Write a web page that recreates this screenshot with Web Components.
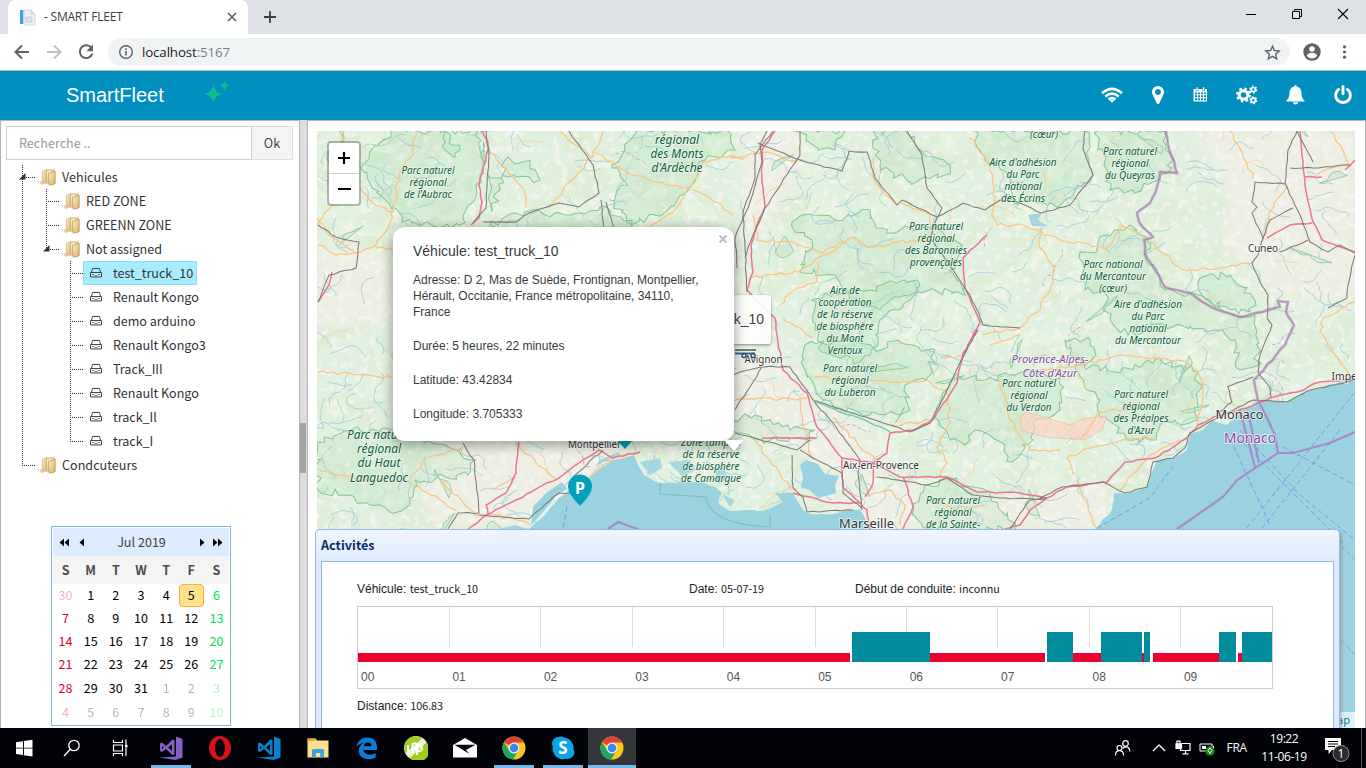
<!DOCTYPE html>
<html lang="fr">
<head>
<meta charset="utf-8">
<title>- SMART FLEET</title>
<style>
html,body{margin:0;height:100%;overflow:hidden}
body{font-family:"Liberation Sans",sans-serif;background:#fff}
</style>
</head>
<body>
<fleet-desktop></fleet-desktop>
<script>
const make = (name, html, after) => customElements.define(name, class extends HTMLElement {
  connectedCallback() {
    if (this.shadowRoot) return;
    const root = this.attachShadow({mode: 'open'});
    root.innerHTML = typeof html === 'function' ? html(this) : html;
    if (after) after(root, this);
  }
});

/* ---------- browser frame ---------- */
make('browser-tabs', `
<style>
:host{display:flex;height:34px;background:#dee1e6;align-items:stretch;font:12px "Open Sans",sans-serif;color:#3c4043}
.tab{width:240px;margin-left:8px;background:#fff;border-radius:8px 8px 0 0;display:flex;align-items:center;box-sizing:border-box;padding:0 10px 0 11px}
.tab span{flex:1;margin:-2px 0 0 8px;letter-spacing:-.22px;white-space:pre}
.plus{margin:9px 0 0 14px;width:16px;height:16px}
.sp{flex:1}
.w{width:46px;display:flex;justify-content:center;align-items:center;height:28px}
svg{display:block}
</style>
<div class="tab"><svg width="17" height="17" viewBox="0 0 17 17"><rect x="1" y="1" width="3.4" height="14" fill="#3ba4d8"/><path d="M5 1h7l4 4v11H5z" fill="#eef2f6" stroke="#c8d0d9" stroke-width=".8"/><path d="M12 1v4h4M7 8h6v5H7z" fill="#dbe2ea" stroke="#bcc6d0" stroke-width=".7"/></svg>
<span>- SMART FLEET</span>
<svg width="12" height="12" viewBox="0 0 12 12"><path d="M2 2l8 8M10 2l-8 8" stroke="#5f6368" stroke-width="1.7"/></svg></div>
<svg class="plus" viewBox="0 0 16 16"><path d="M8 2v12M2 8h12" stroke="#3c4043" stroke-width="1.8"/></svg>
<div class="sp"></div>
<div class="w"><svg width="12" height="12"><path d="M1 6.5h10" stroke="#000"/></svg></div>
<div class="w"><svg width="12" height="12"><path d="M1.5 3.5h7v7h-7zM3.5 3.500v-2h7v7h-2" fill="none" stroke="#000"/></svg></div>
<div class="w"><svg width="12" height="12"><path d="M1 1l10 10M11 1L1 11" stroke="#000" stroke-width="1.1"/></svg></div>
`);

make('browser-toolbar', `
<style>
:host{display:flex;height:36px;background:#fff;border-bottom:1px solid #b9b5b8;align-items:center;font:14px "Open Sans",sans-serif;color:#202124}
svg{display:block;flex:none}
.nav{display:flex;flex:none;gap:14px;padding-left:13px;width:108px;box-sizing:border-box}
.bar{flex:none;width:1182px;height:28px;border-radius:14px;background:#f0f3f4;display:flex;align-items:center;box-sizing:border-box;padding:0 9px 0 9px}
.bar span{flex:1;margin-left:8px;font-size:13.3px;letter-spacing:-.12px}
i{font-style:normal;color:#7c8085}
.end{display:flex;gap:14px;margin-left:12px;align-items:center}
</style>
<div class="nav">
<svg width="18" height="18" viewBox="0 0 18 18"><path d="M16 9H3M9 2.500L2.500 9 9 15.500" fill="none" stroke="#5f6368" stroke-width="2"/></svg>
<svg width="18" height="18" viewBox="0 0 18 18"><path d="M2 9h13M9 2.500L15.500 9 9 15.500" fill="none" stroke="#bdbfc1" stroke-width="2"/></svg>
<svg width="18" height="18" viewBox="0 0 18 18"><path d="M14.600 5.200A6.400 6.400 0 1 0 15.300 10.600" fill="none" stroke="#5f6368" stroke-width="2"/><path d="M16 1.500v6.800H9.300z" fill="#5f6368"/></svg>
</div>
<div class="bar">
<svg style="margin-left:1px" width="16" height="16" viewBox="0 0 16 16"><circle cx="8" cy="8" r="6.300" fill="none" stroke="#5f6368" stroke-width="1.400"/><path d="M8 7v4.500M8 4.300v1.600" stroke="#5f6368" stroke-width="1.600"/></svg>
<span>localhost<i>:5167</i></span>
<svg width="17" height="17" viewBox="0 0 24 24"><path d="M12 3l2.700 6.200 6.800.6-5.100 4.500 1.500 6.600L12 17.400l-5.900 3.500 1.500-6.600-5.100-4.500 6.800-.6z" fill="none" stroke="#5f6368" stroke-width="1.900"/></svg>
</div>
<div class="end">
<svg width="20" height="20" viewBox="0 0 20 20"><circle cx="10" cy="10" r="8.700" fill="#5f6368"/><circle cx="10" cy="7" r="2.800" fill="#fff"/><path d="M4.800 13.800c.8-4 9.600-4 10.400 0-2.400 3.600-8 3.600-10.400 0z" fill="#fff"/></svg>
<svg width="16" height="16" viewBox="0 0 16 16" fill="#5f6368"><circle cx="8.500" cy="2.800" r="1.600"/><circle cx="8.500" cy="8" r="1.600"/><circle cx="8.500" cy="13.200" r="1.600"/></svg>
</div>
`);

/* ---------- application header ---------- */
make('app-header', `
<style>
:host{display:flex;height:49px;background:#008fbf;align-items:center;color:#fff;font:20px "Liberation Sans",sans-serif;box-sizing:border-box;padding-bottom:2px}
b{font-weight:400;margin-left:66px;width:138px;line-height:24px}
.icons{margin-left:auto;display:flex;align-items:center;padding-right:14px}
svg{display:block;fill:#fff}
</style>
<b>SmartFleet</b>
<svg width="26" height="24" viewBox="0 0 26 24" style="fill:#0dbd92;margin-top:-6px"><path d="M9.500 5q1.200 7.500 9 9-7.800 1.500-9 9-1.200-7.500-9-9 7.800-1.500 9-9zM20.500 0q.8 4.600 5 5.500-4.200.9-5 5.500-.8-4.600-5-5.500 4.200-.9 5-5.500z"/></svg>
<div class="icons">
<svg style="margin-right:29px" width="22" height="16" viewBox="0 0 22 16"><g fill="none" stroke="#fff" stroke-width="2.600"><path d="M1 6.200Q11-2.600 21 6.200"/><path d="M4.300 9.400q6.700-5.400 13.400 0"/><path d="M7.500 12.400q3.500-2.600 7 0"/></g><path d="M11 15.800l-2.200-2.200q2.200-1.700 4.400 0z"/></svg>
<svg style="margin-right:29px" width="12" height="18" viewBox="0 -1408 1024 1536"><path transform="scale(1,-1)" d="M768 896q0 106 -75 181t-181 75t-181 -75t-75 -181t75 -181t181 -75t181 75t75 181zM1024 896q0 -109 -33 -179l-364 -774q-16 -33 -47.500 -52t-67.500 -19t-67.500 19t-46.500 52l-365 774q-33 70 -33 179q0 212 150 362t362 150t362 -150t150 -362z"/></svg>
<svg style="margin-right:28px" width="15" height="15" viewBox="0 0 15 15"><path fill-rule="evenodd" d="M.5 2h13.500v12.500H.500zM2 5.500h2.200v1.700H2zM5 5.500h2v1.700H5zM8 5.500h2v1.700H8zM11 5.500h2v1.700h-2zM2 8.200h2.200v2H2zM5 8.200h2v2H5zM8 8.200h2v2H8zM11 8.200h2v2h-2zM2 11.200h2.200v2H2zM5 11.200h2v2H5zM8 11.200h2v2H8zM11 11.200h2v2h-2z"/><path d="M3.200 0h1.800v4H3.200zM9.700 0h1.800v4H9.700z" stroke="#008fbf" stroke-width=".5"/></svg>
<svg style="margin-right:28px" width="22" height="20" viewBox="0 0 22 20"><g fill="none" stroke="#fff"><circle cx="7.500" cy="10" r="4.300" stroke-width="3"/><circle cx="7.500" cy="10" r="6.400" stroke-width="2.200" stroke-dasharray="2.510 2.516"/><circle cx="17.300" cy="4.600" r="2.100" stroke-width="1.700"/><circle cx="17.300" cy="4.600" r="3.400" stroke-width="1.300" stroke-dasharray="1.700 1.860"/><circle cx="17.300" cy="15.300" r="2.100" stroke-width="1.700"/><circle cx="17.300" cy="15.300" r="3.400" stroke-width="1.300" stroke-dasharray="1.700 1.860"/></g></svg>
<svg style="margin-right:29px" width="19" height="20" viewBox="0 0 18 20"><path d="M9 0q1.200 0 1.200 1.500Q15 2.700 15 8c0 4.500 1.500 6 3 7.500v.9H0v-.9C1.500 14 3 12.500 3 8q0-5.300 4.800-6.500Q7.800 0 9 0zM6.400 17.200h5.200Q11.300 19.600 9 19.600t-2.600-2.400z"/></svg>
<svg width="18" height="19" viewBox="0 -1536 1536 1664"><path transform="scale(1,-1)" d="M1536 640q0 -156 -61 -298t-164 -245t-245 -164t-298 -61t-298 61t-245 164t-164 245t-61 298q0 182 80.500 343t226.500 270q43 32 95.500 25t83.500 -50q32 -42 24.500 -94.500t-49.500 -84.500q-98 -74 -151.500 -181t-53.500 -228q0 -104 40.500 -198.500t109.500 -163.500t163.500 -109.500t198.500 -40.500t198.500 40.500t163.500 109.500t109.500 163.500t40.500 198.500q0 121 -53.500 228t-151.500 181q-42 32 -49.500 84.500t24.500 94.500q31 43 84 50t95 -25q146 -109 226.500 -270t80.500 -343zM896 1408v-640q0 -52 -38 -90t-90 -38t-90 38t-38 90v640q0 52 38 90t90 38t90 -38t38 -90z"/></svg>
</div>
`);

/* ---------- side panel ---------- */
make('search-box', `
<style>
:host{display:flex;height:34px;box-sizing:border-box;font:12.600px "Noto Sans CJK JP","Source Sans Pro",sans-serif;width:287px}
.f{flex:1;border:1px solid #ccd0d9;padding-left:12px;display:flex;align-items:center;color:#999}
.b{width:40px;border:1px solid #ddd;border-left:0;background:#f4f4f4;display:flex;align-items:center;justify-content:center;color:#444;border-radius:0 2px 2px 0}
.f,.b{padding-bottom:1px}
</style><div class="f">Recherche ..</div><div class="b">Ok</div>`);

const ICONS = {
  folder: `<svg width="16" height="17" viewBox="0 0 16 17"><defs><linearGradient id="g" x1="0" y1="0" x2="1" y2="1"><stop offset="0" stop-color="#fff3d2"/><stop offset="1" stop-color="#d8ad62"/></linearGradient></defs><path d="M2.500 2l5-1.500v13l-6 2-1.300-2L2.200 11z" fill="url(#g)" stroke="#d6bd8f" stroke-width=".7"/><path d="M6.500 1L14 .8l1 1.200v12.500l-4 1.200-4.500-2z" fill="url(#g)" stroke="#c4a063" stroke-width=".7"/><path d="M8.500 4.500l6.500-2v12.300l-6 1.500z" fill="url(#g)" stroke="#b48a48" stroke-width=".6"/></svg>`,
  car: `<svg width="12" height="10" viewBox="0 0 12 10" fill="none" stroke="#444"><path d="M1.500 4.500l1-4h7l1 4M.5 4.500h11v4.500H.5z"/><path d="M2 6.500h2M8 6.500h2M4.500 7.500h3" stroke-opacity=".65"/></svg>`
};
make('tree-node', el => `
<style>
:host{display:grid;grid-template-columns:24px 1fr;grid-template-rows:24px auto;color:#333;font:12.600px/24px "Noto Sans CJK JP","Source Sans Pro",sans-serif}
.line{grid-column:1;grid-row:1/3;width:1px;background:repeating-linear-gradient(#333 0 1px,transparent 1px 2px)}
:host([last]) .line{height:13px}
.row{grid-column:1/3;grid-row:1;display:flex;align-items:center;position:relative;white-space:pre}
.dots{width:13px;height:1px;margin-top:1px;background:repeating-linear-gradient(90deg,#333 0 1px,transparent 1px 2px)}
.lab{display:flex;align-items:center;height:24px;box-sizing:border-box}
.lab svg{display:block}
.folder{padding-left:6px;gap:5px}
.folder svg{margin-left:-1px;margin-right:1px}
.car{padding:0 3px 0 6px;gap:11px;border:1px solid transparent;letter-spacing:-.04px}
.car svg{margin-top:-1px}
:host([selected]) .lab{background:#a8edff;border-color:#94dcf3;border-radius:1px}
.kids{grid-column:2;grid-row:2}
.arrow{position:absolute;left:-3px;top:8px}
</style>
<div class="line"></div>
<div class="row"><div class="dots"></div>${el.hasAttribute('open') ? '<svg class="arrow" width="7" height="7"><path d="M6.500 0v6.500H0z" fill="#333"/></svg>' : ''}<div class="lab ${el.getAttribute('icon')}">${ICONS[el.getAttribute('icon')]}<span>${el.getAttribute('label')}</span></div></div>
<div class="kids"><slot></slot></div>`);

make('month-calendar', `
<style>
:host{display:block;width:180px;height:200px;box-sizing:border-box;border:1px solid #7fb2e5;padding:1px;font:12.600px "Noto Sans CJK JP","Source Sans Pro",sans-serif;color:#000;background:#fff}
.h{height:28px;background:#ddecfe;display:flex;align-items:center;color:#404040;padding:0 5px 0 6px}
.h span{flex:1;text-align:center;margin:-2px 2px 0 0}
.g{display:grid;grid-template-columns:repeat(7,1fr);grid-template-rows:28px 23px 23px 23px 23px 24px 24px}
.g div{display:flex;align-items:center;justify-content:center;box-sizing:border-box;padding:0 0 2px 0}
.d{background:#f4f4f4;font-weight:700;color:#4d4d4d}
.sun{color:#d9001b}.sat{color:#00e04c}.out{opacity:.3}
.g .today{background:#ffe28d;border:1px solid #ffab3f;border-radius:4px}
svg{display:block}
</style>
<div class="h"><svg width="28" height="9"><path d="M5 .500v8L.500 4.500zM10 .500v8L5.500 4.500zM25 .500v8l-4.500-4z"/></svg><span>Jul 2019</span><svg width="26" height="9"><path d="M2 .500v8l4.500-4zM15 .500v8l4.500-4zM20 .500v8l4.500-4z"/></svg></div>
<div class="g"></div>`, root => {
  const g = root.querySelector('.g');
  let h = [...'SMTWTFS'].map(d => `<div class="d">${d}</div>`).join('');
  for (let i = 0; i < 42; i++) {
    const n = i === 0 ? 30 : i > 31 ? i - 31 : i, c = [];
    if (i % 7 === 0) c.push('sun');
    if (i % 7 === 6) c.push('sat');
    if (i === 0 || i > 31) c.push('out');
    if (i === 5) c.push('today');
    h += `<div class="${c.join(' ')}">${n}</div>`;
  }
  g.innerHTML = h;
});

make('side-panel', `
<style>
:host{display:flex;flex-direction:column;width:300px;box-sizing:border-box;border:1px solid #b5b5b5;border-bottom:0;background:#fff;padding:5px 0 0 5px}
.tree{padding:5px 0 0 16px;height:361px}
month-calendar{margin-left:45px}
</style>
<search-box></search-box>
<div class="tree">
<tree-node label="Vehicules" icon="folder" open>
 <tree-node label="RED ZONE" icon="folder"></tree-node>
 <tree-node label="GREENN ZONE" icon="folder"></tree-node>
 <tree-node label="Not assigned" icon="folder" open last>
  <tree-node label="test_truck_10" icon="car" selected></tree-node>
  <tree-node label="Renault Kongo" icon="car"></tree-node>
  <tree-node label="demo arduino" icon="car"></tree-node>
  <tree-node label="Renault Kongo3" icon="car"></tree-node>
  <tree-node label="Track_III" icon="car"></tree-node>
  <tree-node label="Renault Kongo" icon="car"></tree-node>
  <tree-node label="track_Il" icon="car"></tree-node>
  <tree-node label="track_I" icon="car" last></tree-node>
 </tree-node>
</tree-node>
<tree-node label="Condcuteurs" icon="folder" last></tree-node>
</div>
<month-calendar></month-calendar>`);

make('split-bar', `
<style>:host{display:flex;align-items:flex-start;width:7px;background:#dcdcdc}
div{width:6px;height:50px;margin-top:303px;background:#a5a5a5}</style><div></div>`);

/* ---------- map ---------- */
let seed = 7;
const rnd = () => (seed = (seed * 16807) % 2147483647) / 2147483647;
const pts = s => s.trim().split(/\s+/).map(p => p.split(',').map(Number));
const rough = (s, amp, step = 6) => {
  const p = pts(s), out = [p[0]];
  for (let i = 1; i < p.length; i++) {
    const [a, b] = p[i - 1], [c, d] = p[i], n = Math.max(1, Math.round(Math.hypot(c - a, d - b) / step));
    for (let k = 1; k <= n; k++) {
      const t = k / n, j = k < n ? amp : 0;
      out.push([a + (c - a) * t + (rnd() - .5) * 2 * j, b + (d - b) * t + (rnd() - .5) * 2 * j]);
    }
  }
  return 'M' + out.map(q => q[0].toFixed(1) + ' ' + q[1].toFixed(1)).join('L');
};
const PLAINS = [
 '1190,131 1355,131 1355,300 1290,300 1262,290 1255,262 1225,255 1230,200 1215,160',
 '700,370 735,345 790,365 810,395 860,430 890,450 870,510 800,450 735,430',
 '440,445 520,442 600,442 640,450 560,492 520,529 440,529 420,500',
 '318,250 350,240 390,265 393,320 318,330','980,500 1100,480 1115,510 1095,529 980,529','820,500 920,480 930,529 867,529',
 '740,131 800,131 800,180 770,220 745,250'];
const PARKS = [
 '391,131 361,168 372,188 395,208 402,222 440,228 460,225 476,195 483,165 478,131',
 '636,131 625,150 612,168 627,185 610,200 632,225 668,210 690,188 705,160 735,150 728,131',
 '795,131 818,150 835,150 845,131','873,131 880,165 910,182 945,175 950,165 925,155 905,131',
 '792,222 812,215 838,221 858,213 870,210 876,228 900,230 925,226 962,245 950,270 965,295 930,290 900,297 880,310 850,300 835,275 800,272 812,240 795,232',
 '812,300 835,292 870,290 905,280 920,285 910,300 880,320 878,345 860,362 822,352 815,330',
 '1097,131 1104,165 1110,190 1135,193 1160,180 1172,168 1165,131','975,131 1085,131 1093,175 1060,205 1015,203 1003,170 985,160',
 '1080,252 1095,253 1105,235 1130,225 1148,240 1146,260 1165,290 1200,295 1238,317 1255,315 1258,365 1240,370 1235,340 1215,330 1180,325 1150,328 1128,335 1110,320 1104,290 1085,290',
 '1075,365 1120,372 1155,360 1198,372 1198,420 1160,425 1150,440 1127,440 1115,425 1098,412 1100,400 1085,388',
 '805,345 850,340 875,350 900,342 935,350 930,375 905,385 910,410 870,415 840,408 818,395 805,370',
 '955,375 985,380 1030,370 1060,378 1060,410 1033,425 1033,440 1012,462 1005,445 975,430 965,445 950,440 935,418',
 '318,442 350,430 393,430 450,448 475,460 468,475 415,480 410,505 390,512 370,505 345,495 318,490',
 '735,420 755,415 790,430 815,430 810,440 755,440 735,432','925,485 950,480 990,492 1015,529 930,529 912,515','490,225 525,212 565,215 600,207 640,228 600,260 520,250',
 '445,131 452,145 460,150 455,157 445,150','540,180 535,170 530,160 505,160 500,190 492,212 488,175','1200,278 1230,275 1255,300 1250,312 1215,307 1200,292',
 '1065,340 1075,338 1090,340 1096,355 1085,365 1070,355'];
const WAY = {
 motor: ['482,131 488,142 488,150 484,165 479,185 482,202 479,218 471,225','775,131 762,150 762,182 765,207 757,225 751,245 753,272 747,290 775,318 778,342 783,370 807,393 817,427 842,458 843,487 867,510 870,529','978,330 963,353 957,383 933,420 913,430 890,433 887,453 873,463 873,483 865,497','987,235 963,258 965,288 980,322 968,345 960,365','842,458 873,463 900,477 947,477 977,492 1020,493 1047,498 1067,487 1107,482 1125,462 1155,458 1173,447 1187,438 1198,425 1220,415 1247,408 1270,398 1297,392 1320,382 1355,379','1047,498 1030,510 1020,525 1005,529','762,438 817,438','640,452 613,458 599,450 579,463 563,475 516,500 486,515 468,529','519,442 516,473 506,493 486,505 488,514','1300,131 1305,185 1313,222 1322,240 1355,252','1267,238 1290,225 1312,223','1305,177 1322,177','903,477 913,507 903,529','793,493 833,503 860,503','318,302 329,285 332,272','1345,170 1355,160'],
 rail: ['773,131 755,155 755,178 743,212 745,248 747,292','767,131 760,145 762,162 750,202 735,238 737,268','800,131 800,155 765,208 753,235 745,258','758,143 800,160 842,171 849,151 867,152 875,178 897,205 902,200 937,217 963,203 985,210 1000,200 1017,202 1042,213 1070,205 1093,175 1083,148 1085,131','907,131 922,155 927,188 942,208 937,218 930,238 950,265 970,295 983,325 1020,328','977,330 963,357 947,390 930,423 910,432 890,425 843,410 813,400 790,367 762,367 750,387 735,410','735,433 797,450 810,440','813,400 833,423 860,460 858,473 862,510','800,450 823,463 842,473 843,493 862,508','792,455 793,487 803,497 807,512 853,510','486,131 489,155 486,208 473,223','483,222 516,222 529,213 559,203 579,207 599,193 593,165 569,131','601,200 604,228','606,202 614,228','318,225 336,237 359,242 356,268 329,275 318,302','463,443 474,460 479,513 458,513 448,529','479,515 529,519 559,493 569,493 573,477 603,450','1297,131 1288,150 1285,183 1300,215 1310,242 1328,252 1340,245 1355,253','1285,184 1255,182 1252,202 1257,207 1252,213 1263,238 1258,255 1252,263 1260,282 1268,295 1267,318 1272,325 1260,355 1258,372 1270,388 1271,397','1263,238 1270,220 1293,208','1290,168 1313,168 1350,165','1297,131 1313,162','1280,252 1308,240','1355,255 1348,285 1347,298 1328,308','1040,498 1062,487 1103,482 1125,493 1147,487 1153,462 1173,458 1185,448 1190,433 1223,415 1253,400 1287,402 1307,391 1355,380','1227,387 1253,377','1228,387 1232,402 1220,412','877,477 887,478 927,485 947,478 973,495 1005,498 1045,500','762,367 740,372 728,378','1010,529 1030,500 1047,498'],
 road: ['416,131 413,155 399,175 394,208 388,228 376,245 356,253 329,235 317,218','361,188 376,205 394,212','318,245 336,255 356,253','376,248 393,248','488,148 523,188 526,208','549,208 569,182 593,157 603,131','594,152 633,175 666,185 691,187 676,208 649,228','691,187 703,162 726,157 745,158','693,190 716,202 733,215','730,158 767,152 797,162','753,215 757,240 793,242 823,253 853,237 873,248 897,242 930,240','750,278 780,273 798,272 847,242','780,305 797,288 817,282 818,262','783,318 813,338','970,138 983,155 993,175 995,198 992,215 997,225 1023,225 1060,240 1107,248 1122,225 1150,242 1183,270 1227,267 1253,262','873,158 875,182 897,205','900,202 930,215 932,235','1040,228 1040,248 1053,265 1053,282 1037,312 1020,328 983,335','1230,131 1243,155 1253,178','1287,185 1270,212 1264,236','1317,175 1330,168 1350,165 1340,145 1330,131','1355,302 1323,318 1320,332 1333,352 1350,375','1040,370 1080,365 1120,355 1187,362 1198,372 1203,392 1197,425','1073,475 1067,458 1090,448 1123,440 1153,438','1077,480 1083,498 1097,528','318,372 363,375 393,378','316,468 336,475 370,480','406,480 430,495 456,510','410,478 429,457 463,447','516,443 536,463 556,480','493,490 516,478','815,377 867,380 900,383 927,380 947,393','735,400 807,398','892,425 930,420','947,393 950,423 937,447 947,463 940,477','833,417 860,447 883,463','800,397 803,427 813,460','755,440 783,480 800,495','940,357 963,357','560,131 575,145 593,157','317,225 335,200 330,180 345,160 340,131','590,477 613,458 634,453','440,480 475,515 500,515 530,525','1000,380 1010,420 1030,450 1060,450','990,345 1020,335','1080,440 1100,412 1140,408','870,495 890,490 905,505 900,525','930,500 960,510 985,505','1180,440 1150,455 1120,490']};
const SEA = '529,529 545,515 558,499 566,493 590,477 603,467 613,460 634,455 639,467 644,475 659,483 700,482 715,487 722,493 718,503 730,511 748,510 763,511 783,502 775,493 793,493 803,510 810,514 833,514 850,510 860,510 866,520 868,532 868,729 529,729';
const SEA_E = '1095,529 1112,510 1114,493 1127,494 1147,487 1152,472 1157,460 1173,458 1187,450 1190,434 1203,430 1212,421 1227,425 1243,410 1260,400 1287,402 1307,391 1340,382 1356,380 1356,729 1090,729';
const LABELS = [
 ['p',428,170,['Parc naturel',53],['régional',37],["de l'Aubrac",48]],
 ['q',677,140,['régional',44],['des Monts',53],["d'Ardèche",51]],
 ['p',1023,162,["Aire d'adhésion",67],['du Parc',33],['national',37],['des Écrins',44]],
 ['p',1044,134,['(cœur)',28]],
 ['p',1130,151,['Parc naturel',54],['régional',37],['du Queyras',50]],
 ['p',936,226,['Parc naturel',54],['régional',37],['des Baronnies',62],['provençales',52]],
 ['p',845,290,['Aire de',30],['coopération',53],['de la réserve',56],['de biosphère',57],['du Mont',37],['Ventoux',35]],
 ['p',1113,264,['Parc national',59],['du Mercantour',66],['(cœur)',28]],
 ['p',1148,304,["Aire d'adhésion",68],['du Parc',33],['national',37],['du Mercantour',66]],
 ['p',850,368,['Parc naturel',54],['régional',37],['du Luberon',51]],
 ['p',1029,383,['Parc naturel',54],['régional',37],['du Verdon',45]],
 ['p',1141,394,['Parc naturel',54],['régional',37],['des Préalpes',55],["d'Azur",27]],
 ['p',953,500,['Parc naturel',54],['régional',37],['de la Sainte-',54]],
 ['p',711,442,['Zone tampon',60],['de la réserve',57],['de biosphère',57],['de Camargue',60]],
 ['q',379,435,['Parc naturel',64],['régional',44],['du Haut',43],['Languedoc',58]],
 ['r',1050,359,['Provence-Alpes-',77],["Côte d'Azur",55]]];
const LH = {p: 12, q: 14.4, r: 14.4};
make('fleet-map', `
<style>
:host{display:block;position:relative;height:597px;overflow:hidden;background:#dcecd3}
svg.m{display:block;width:1038px;height:597px}
.p,.q,.r{font-family:"Noto Sans",sans-serif;font-style:italic;text-anchor:middle;paint-order:stroke;stroke:#fff;stroke-opacity:.6;stroke-width:1.600px;stroke-linejoin:round;fill:#075c37}
.p{font-size:10px}.q{font-size:12px}.r{font-size:11px;fill:#8a4f9c}
.c{font-family:"Noto Sans",sans-serif;paint-order:stroke;stroke:#fff;stroke-opacity:.65;stroke-width:2px;fill:#333}
.zoom{position:absolute;left:10px;top:10px;border:2px solid rgba(0,0,0,.25);border-radius:4px;width:30px;background:#fff;background-clip:padding-box}
.zoom svg{display:block;width:30px;height:30px}
.zoom svg+svg{border-top:1px solid #ccc;height:30px}
.tip{position:absolute;right:584px;top:164px;width:60px;height:49px;box-sizing:border-box;padding-right:7px;background:rgba(255,255,255,.87);color:#444;font:14px/49px "Liberation Sans",sans-serif;text-align:right;box-shadow:0 1px 3px rgba(0,0,0,.4);border-radius:3px}
.attr{position:absolute;right:0;bottom:0;height:16px;padding:0 5px;background:rgba(255,255,255,.7);color:#0078a8;font:11px/15px "Noto Sans CJK JP",sans-serif}
slot{display:block}
::slotted(map-popup){position:absolute;left:76px;top:96px}
</style>
<svg class="m" viewBox="317 131 1038 597"></svg>
<div class="zoom"><svg viewBox="0 0 30 30"><path d="M15 9v12M9 15h12" stroke="#000" stroke-width="2.200"/></svg><svg viewBox="0 0 30 30"><path d="M9 15h13" stroke="#000" stroke-width="2"/></svg></div>
<div class="tip">k_10</div>
<div class="attr">ap</div>
<slot></slot>`, root => {
  const P = (d, a) => `<path d="${d}" ${a}/>`;
  let streams = '', minor = '', admin = '', patches = '';
  for (let i = 0; i < 460; i++) {
    let x = 317 + rnd() * 1038, y = 131 + rnd() * 400, a = rnd() * 6.3, d = `M${x.toFixed(1)} ${y.toFixed(1)}`;
    for (let k = 0, n = 5 + rnd() * 9; k < n; k++) {
      a += (rnd() - .5) * 1.5; x += Math.cos(a) * 3.6; y += Math.sin(a) * 3;
      d += `L${x.toFixed(1)} ${y.toFixed(1)}`;
    }
    if (i % 16 === 1) minor += d; else if (i % 26 === 2) admin += d; else if (i % 14 === 3) patches += d + 'Z'; else streams += d;
  }
  const land = `<defs>
<filter id="n" x="0" y="0" width="100%" height="100%"><feTurbulence type="fractalNoise" baseFrequency=".022 .03" numOctaves="6" seed="11"/><feColorMatrix values="0 0 0 0 .75  0 0 0 0 .88  0 0 0 0 .75  8 0 0 0 -3.400"/></filter>
<filter id="n2" x="0" y="0" width="100%" height="100%"><feTurbulence type="fractalNoise" baseFrequency=".13" numOctaves="4" seed="4"/><feColorMatrix values="0 0 0 0 .95  0 0 0 0 .92  0 0 0 0 .9  0 8 0 0 -4.500"/></filter>
<filter id="n3" x="0" y="0" width="100%" height="100%"><feTurbulence type="fractalNoise" baseFrequency=".03 .04" numOctaves="5" seed="23"/><feColorMatrix values="0 0 0 0 .83  0 0 0 0 .95  0 0 0 0 .76  0 0 9 0 -4.700"/></filter>
<filter id="b" x="-20%" y="-20%" width="140%" height="140%"><feGaussianBlur stdDeviation="7"/></filter>
<pattern id="h" width="5" height="5" patternUnits="userSpaceOnUse" patternTransform="rotate(45)"><path d="M0 0v5" stroke="#f0a090" stroke-width="1"/></pattern></defs>
<rect x="317" y="131" width="1038" height="597" fill="#ddedd6"/>
<rect x="317" y="131" width="1038" height="400" filter="url(#n3)" opacity=".6"/>
<rect x="317" y="131" width="1038" height="400" filter="url(#n)" opacity=".8"/>`;
  let s = land + PLAINS.map(p => `<polygon points="${p}" fill="#f3efe7" opacity=".75" filter="url(#b)"/>`).join('');
  s += `<rect x="317" y="131" width="1038" height="400" filter="url(#n2)" opacity=".7"/>`;
  s += PARKS.map(p => P(rough(p + ' ' + p.split(' ')[0], 3.8, 5) + 'Z', 'fill="#a2dcaa" fill-opacity=".2" stroke="#86c898" stroke-width="1.050"')).join('');
  s += P(patches, 'fill="#b4dfb8" fill-opacity=".3" stroke="#8ccb9c" stroke-width=".9"');
  s += P(streams, 'fill="none" stroke="#9bccd6" stroke-width=".8"') + P(minor, 'fill="none" stroke="#f9d09c" stroke-width=".9"') + P(admin, 'fill="none" stroke="#c9a0cb" stroke-width=".9" stroke-dasharray="4 2"');
  s += P('M1020 418L1026 412 1045 417 1070 425 1082 419 1106 416 1103 429 1085 440 1045 437 1022 431Z', 'fill="#fbd5c8" fill-opacity=".7" stroke="#eeb3a2" stroke-opacity=".6"') + P('M1020 418L1045 417 1070 425 1106 416 1103 429 1085 440 1045 437 1022 431Z', 'fill="url(#h)" opacity=".3"');
  s += P(rough(SEA, .6) + 'Z', 'fill="#9ad2e0"') + P(rough(SEA_E, .7) + 'Z', 'fill="#9ad2e0"');
  s += P('M533 507L546 493 562 482 567 489 556 496 545 510 531 525ZM800 465L806 460 818 464 825 474 839 476 835 485 836 493 818 498 808 489 801 488 803 477Z', 'fill="#9ad2e0"');
  s += P('M640 462L660 458 662 468 650 475ZM668 462L690 460 696 470 682 476ZM715 470L722 463 728 478 718 484ZM595 466L612 458 620 455 618 452 600 460ZM722 495L735 500 730 507ZM500 529L515 525 528 529ZM1028 215L1042 213 1038 220 1048 226 1032 226Z', 'fill="#9ad2e0" opacity=".85"');
  s += P('M660 483V494L706 497Q708 524 770 527V515', 'fill="none" stroke="#73c3ad" stroke-width="1.100"');
  s += WAY.road.map(p => P(rough(p, 1.7, 5), 'fill="none" stroke="#fac586" stroke-width="1.300"')).join('');
  s += WAY.motor.map(p => P(rough(p, .7), 'fill="none" stroke="#ec7590" stroke-width="1.500"')).join('');
  s += WAY.rail.map(p => P(rough(p, .6), 'fill="none" stroke="#807b75" stroke-width="1.050"')).join('');
  s += P(rough('813,400 840,412 865,420 890,432', .6), 'fill="none" stroke="#77c6ad" stroke-width="1.400"');
  const bd = rough('1165,131 1168,145 1177,173 1160,172 1157,187 1150,203 1137,213 1139,222 1153,237 1144,240 1145,253 1165,287 1190,293 1213,308 1240,317 1280,307 1278,301 1288,302 1286,312 1294,325 1285,345 1267,365 1254,380 1258,400', .8);
  s += P(bd, 'fill="none" stroke="#bd7fc4" stroke-opacity=".6" stroke-width="2.800"') + P(bd, 'fill="none" stroke="#777" stroke-opacity=".4" stroke-width="1.200"');
  s += P('M1258 400L1267 418 1275 435 1278 453M1240 410L1255 467M1248 412L1259 463M1177 529L1223 497 1237 480 1278 453 1293 453 1330 443 1355 432M608 529L618 522 638 529', 'fill="none" stroke="#a98bc8" stroke-width="2.200"');
  s += P('M1227 432L1270 525M1232 432L1345 545M1247 528L1355 392M1283 447L1355 485M1097 528L1150 498 1173 466M1262 528L1340 430M1240 430L1300 495 1355 540M567 507L563 529M1341 546L1355 560M1341 640L1355 655', 'fill="none" stroke="#6f96e6" stroke-width=".9" stroke-dasharray="5 3"');
  for (const [c, x, y, ...ls] of LABELS) ls.forEach(([t, w], i) => s += `<text class="${c}" x="${x}" y="${y + 3.5 + i * LH[c]}" textLength="${w}" lengthAdjust="spacingAndGlyphs">${t}</text>`);
  for (const [t, x, y, w, f, col] of [['Cuneo',1248,251.500,30,10.500],['Montpellier',568,448,53,10.500],['Avignon',744.500,363,38,10.500],['Aix-en-Provence',843,468.500,76,10.500],['Marseille',839,528,55,13],['Monaco',1215.500,418.500,48,13],['Monaco',1224,443,52,14,'#8d4f9e'],['Imperia',1331.500,379.500,38,10.500]])
    s += `<text class="c" x="${x}" y="${y}" textLength="${w}" lengthAdjust="spacingAndGlyphs" font-size="${f}" ${col ? `style="fill:${col}"` : ''}>${t}</text>`;
  s += `<g fill="none" stroke="#3a4a58" stroke-width="1.400"><path d="M735 350h21"/><path d="M735 353.500h20" stroke="#2a6ea3" stroke-width="2"/><circle cx="744" cy="355.500" r="2"/><circle cx="753" cy="355.500" r="2"/></g>`;
  const pin = (x, y) => `<path transform="translate(${x} ${y})" d="M0 0Q-12-12-12-19.500A12 12 0 0 1 12-19.500Q12-12 0 0z" fill="#00a0bd"/>`;
  s += pin(625, 449) + pin(580, 506) + `<text x="580" y="493.500" font-family="Noto Sans,sans-serif" font-weight="700" font-size="16" fill="#fff" text-anchor="middle">P</text>`;
  root.querySelector('.m').innerHTML = s;
});

make('map-popup', `
<style>
:host{display:block;width:341px;height:214px;box-sizing:border-box;background:#fff;border-radius:12px;padding:14px 20px;box-shadow:0 3px 14px rgba(0,0,0,.4);color:#3a3a3a;font:12px/16px "Liberation Sans",sans-serif}
h4{margin:0 0 11px;font-weight:400;font-size:14px;line-height:20px}
p{margin:0 0 18px;white-space:nowrap}
.x{position:absolute;right:6px;top:7px}
.tail{position:absolute;left:331px;top:213px;z-index:1;overflow:visible;filter:drop-shadow(0 2px 3px rgba(0,0,0,.3))}
</style>
<svg class="x" width="10" height="10"><path d="M1.500 1.500l7 7M8.500 1.500l-7 7" stroke="#c3c3c3" stroke-width="2.400"/></svg>
<h4>Véhicule: test_truck_10</h4>
<p>Adresse: D 2, Mas de Suède, Frontignan, Montpellier,<br>Hérault, Occitanie, France métropolitaine, 34110,<br>France</p>
<p>Durée: 5 heures, 22 minutes</p><p>Latitude: 43.42834</p><p>Longitude: 3.705333</p>
<svg class="tail" width="20" height="12"><path d="M0 0h20L10 11z" fill="#fff"/></svg>`);

/* ---------- activity window ---------- */
make('activity-chart', `
<style>
:host{display:block;width:916px;height:83px;box-sizing:border-box;border:1px solid #ccc}
svg{display:block}
.l{display:flex;font:12px/31px "Liberation Sans",sans-serif;height:26px;color:#555}
.l span{width:91.450px;flex:none;box-sizing:border-box;padding-left:3px}
</style>
<svg width="914" height="55" viewBox="358 607 914 55" shape-rendering="crispEdges"></svg><div class="l"></div>`, root => {
  let s = '', l = '';
  for (let i = 0; i < 10; i++) {
    if (i) s += `<rect x="${Math.round(357.300 + i * 91.450)}" y="607" width="1" height="40" fill="#ddd"/>`;
    l += `<span>0${i}</span>`;
  }
  for (const [a, b] of [[358,850],[930,1045],[1073,1101],[1142,1144],[1153,1219],[1238,1242]]) s += `<rect x="${a}" y="653" width="${b - a}" height="9" fill="#ef0030"/>`;
  for (const [a, b] of [[852,930],[1047,1073],[1101,1142],[1144,1150],[1219,1236],[1242,1272]]) s += `<rect x="${a}" y="632" width="${b - a}" height="30" fill="#008c9a"/>`;
  root.querySelector('svg').innerHTML = s;
  root.querySelector('.l').innerHTML = l;
});

make('activity-window', `
<style>
:host{display:flex;flex-direction:column;width:1025px;height:199px;box-sizing:border-box;border:1px solid #95b8e7;border-bottom:0;border-radius:5px 5px 0 0;background:linear-gradient(#eff5ff,#dfebfd 32px);padding:0 5px;box-shadow:2px 2px 3px rgba(120,120,120,.4)}
header{height:31px;font:700 12.600px/30px "Noto Sans CJK JP",sans-serif;color:#0e2d5f;letter-spacing:.02px}
main{flex:1;background:#fff;border:1px solid #95b8e7;border-bottom:0;padding:17px 0 0 35px;color:#222;font:12px/18px "Liberation Sans",sans-serif;overflow:hidden}
.r{display:grid;grid-template-columns:332px 166px auto;height:27px}
i{font:10.800px/18px "Noto Sans CJK JP",sans-serif;letter-spacing:-.06px}
.d{margin-top:7px}
</style>
<header>Activités</header>
<main><div class="r"><span>Véhicule: <i>test_truck_10</i></span><span>Date: <i>05-07-19</i></span><span>Début de conduite: <i>inconnu</i></span></div>
<activity-chart></activity-chart>
<div class="d">Distance: <i>106.83</i></div></main>`);

make('map-panel', `
<style>
:host{display:block;position:relative;flex:1;box-sizing:border-box;border:1px solid #b5b5b5;border-bottom:0;padding:10px 10px 0 9px;background:#fff;overflow:hidden}
activity-window{position:absolute;left:7px;top:408px}
</style>
<fleet-map><map-popup></map-popup></fleet-map>
<activity-window></activity-window>`);

/* ---------- taskbar ---------- */
const chrome = `<svg viewBox="0 0 24 24"><circle cx="12" cy="12" r="11.500" fill="#fbc916"/><path d="M12 12L2 6.200A11.500 11.500 0 0 1 22 6.500H12z" fill="#db4437"/><path d="M2 6.200A11.500 11.500 0 0 0 11 23.500L16.700 14.500 12 12 7.300 14.500z" fill="#1da462"/><circle cx="12" cy="12" r="5.500" fill="#f1f1f1"/><circle cx="12" cy="12" r="4.300" fill="#4285f4"/></svg>`;
const APPS = [
 ['', `<svg viewBox="0 0 24 24" fill="#fff"><path d="M4 6.200l7-1v6.500H4zM12 5l8.500-1.200v7.900H12zM4 12.600h7v6.500l-7-1zM12 12.600h8.500v7.900L12 19.300z"/></svg>`],
 ['', `<svg viewBox="0 0 24 24" fill="none" stroke="#fff" stroke-width="1.300"><circle cx="14" cy="9.500" r="5.200"/><path d="M10.300 13.200L4 20"/></svg>`],
 ['', `<svg viewBox="0 0 24 24" fill="none" stroke="#fff" stroke-width="1.200"><path d="M5.500 4v2.500h9V4M5.500 9h9v6h-9zM5.500 20v-2.500h9V20M18 3.500V9M18 12v8"/><path d="M17 9h2.500v2.500H17z" fill="#fff" stroke="none"/></svg>`],
 ['run', `<svg viewBox="0 0 24 24"><path fill="#865fc5" fill-rule="evenodd" d="M17 .5L23.500 3v18.500L16.500 24 .5 21.500 17 20.500zM1 7.500l2-1 4 3.500 6.500-6.500 2 .8v14l-2.200.8L7 13l-4 3-2-1zM3 10v3l1.800-1.500zM9 11.500l4 3.200V8.300z"/></svg>`],
 ['', `<svg viewBox="0 0 24 24"><ellipse cx="12" cy="12" rx="11" ry="12" fill="#d9111f"/><ellipse cx="12" cy="12" rx="5" ry="9" fill="#05070d"/></svg>`],
 ['', `<svg viewBox="0 0 24 24"><path fill="#0a7fcc" fill-rule="evenodd" d="M17 .5L23.500 3v18.500L16.500 24 .5 21.500 17 20.500zM1 7.500l2-1 4 3.500 6.500-6.500 2 .8v14l-2.200.8L7 13l-4 3-2-1zM3 10v3l1.800-1.500zM9 11.500l4 3.200V8.300z"/></svg>`],
 ['', `<svg viewBox="0 0 24 24"><path d="M1.500 2.500h8l1.500 2h11.500v17H1.500z" fill="#fce08b"/><path d="M1.500 2.500h8v2.500h-8z" fill="#e8a92c"/><path d="M6 21.500v-8q6-1.500 12 0v8h-3.800v-4.500H9.800v4.500z" fill="#31a8e3"/></svg>`],
 ['', `<svg viewBox="0 0 24 24"><path fill="#0f7bd8" d="M1.500 11C3 4 7 1.500 12.500 1.500c6 0 9.500 4 9.500 10V14H8.500c.2 3.300 3 4.500 6 4.500 2.500 0 4.500-.6 6.200-1.600v4.600c-2 1.200-4.400 1.500-7 1.500-6.300 0-9.900-3.500-9.900-8.500 0-3.500 2-6.300 5.600-7.800-3.300.3-5.900 1.600-7.900 4.300zM8.700 10.300h7.800c0-2.700-1.500-3.800-3.800-3.800-2.200 0-3.600 1.400-4 3.800z"/></svg>`],
 ['', `<svg viewBox="0 0 24 24"><circle cx="12" cy="12" r="12" fill="#e9f3d2"/><path d="M2 17A11 11 0 0 1 18 2.500zM6 22L22.500 6.500A11.300 11.300 0 0 1 6 22z" fill="#9fce1b"/><path d="M4 17V9M8.500 17V8q5-2 4 2t-4 2M13 19V10q5-2 5 2t-5 3" fill="none" stroke="#fff" stroke-width="2"/></svg>`],
 ['', `<svg viewBox="0 0 24 24"><path d="M0 9L12 2l12 7v12.500H0z" fill="#fff"/><path d="M1.500 8.800H22.500L13 14l3.500 4z" fill="#05070d"/></svg>`],
 ['run', chrome],
 ['run', `<svg viewBox="0 0 24 24"><path d="M7.500 1A6.500 6.500 0 0 1 13 1.500 10.500 10.500 0 0 1 22.500 13.500 6.500 6.500 0 0 1 15 22.800 10.500 10.500 0 0 1 1.800 10.500 6.500 6.500 0 0 1 7.500 1z" fill="#0aa5e8"/><text x="12" y="18" text-anchor="middle" font-family="Noto Sans,sans-serif" font-weight="700" font-size="17" fill="#fff">S</text></svg>`],
 ['on', chrome]];
make('task-bar', `
<style>
:host{display:flex;height:40px;background:#010309;color:#fff;font:12px/18px "Open Sans",sans-serif}
.a{width:48px;margin-right:1px;box-sizing:border-box;display:flex;flex-direction:column;align-items:center;padding-top:8px;justify-content:space-between}
.a:nth-of-type(-n+3){margin-right:0}
.a:nth-of-type(3){margin-right:3px}
.a svg{width:24px;height:24px;display:block}
.a u{width:40px;height:3px}
.run u{background:#76b9ed}
.on{background:#33363b}.on u{width:48px;background:#76b9ed}
.t{margin-left:auto;display:flex;align-items:center}
.t svg{display:block;flex:none}
.clk{text-align:center;width:50px;letter-spacing:-.45px;margin:0 15px 0 12px;white-space:nowrap}
.e{border-left:1px solid #555;height:40px;width:4px}
</style>
${APPS.map(([c, s]) => `<div class="a ${c}">${s}<u></u></div>`).join('')}
<div class="t">
<svg width="18" height="18" viewBox="0 0 18 18" fill="none" stroke="#fff" stroke-width="1.200"><circle cx="11.500" cy="4.500" r="2.800"/><circle cx="5.500" cy="9" r="2.500"/><path d="M1.500 16.500q0-4.800 4-4.800t4 4.800M8.800 9.500q2-2.200 4.500-1.500 2.500 1 2.500 4.500"/></svg>
<svg style="margin-left:20px" width="14" height="10"><path d="M1 8l6-6 6 6" fill="none" stroke="#fff" stroke-width="1.400"/></svg>
<svg style="margin-left:9px" width="16" height="16" viewBox="0 0 16 16" fill="none" stroke="#fff" stroke-width="1.200"><path d="M6.500 3.500H15v7H5.500V9M10.500 10.500v3M7.500 13.800h6"/><path d="M1 3.800h5.500v4.500H1z" fill="#fff"/><path d="M2 4V1.200h3V4" /></svg>
<svg style="margin-left:8px" width="16" height="16" viewBox="0 0 16 16"><path d="M1 4h12v7H1z" fill="none" stroke="#fff"/><path d="M3 6h4v3H3zM14 6h1v3h-1z" fill="#fff"/><circle cx="11" cy="11" r="4.700" fill="#10881c"/><path d="M11 7.800l2 2.800-2 2.200-2-2.200zM11 12v2" fill="none" stroke="#fff" stroke-width="1"/></svg>
<span style="margin-left:11px;letter-spacing:-.2px">FRA</span>
<div class="clk">19:22<br>11-06-19</div>
<svg style="margin-right:9px" width="28" height="30" viewBox="0 0 28 30"><path d="M1 5h16v12H8l-3.500 4v-4H1z" fill="#fff"/><path d="M4 8.500h10M4 11h10M4 13.500h7" stroke="#010309"/><circle cx="17" cy="20.500" r="8" fill="#2b2b2b" stroke="#8d8d8d"/><text x="17" y="25" font-family="Open Sans,sans-serif" font-size="12" fill="#fff" text-anchor="middle">1</text></svg>
<div class="e"></div>
</div>`);

make('fleet-desktop', `
<style>
:host{display:flex;flex-direction:column;width:1366px;height:768px;overflow:hidden}
.work{flex:1;display:flex;min-height:0;overflow:hidden}
</style>
<browser-tabs></browser-tabs><browser-toolbar></browser-toolbar><app-header></app-header>
<div class="work"><side-panel></side-panel><split-bar></split-bar><map-panel></map-panel></div>
<task-bar></task-bar>`);
</script>
</body>
</html>
